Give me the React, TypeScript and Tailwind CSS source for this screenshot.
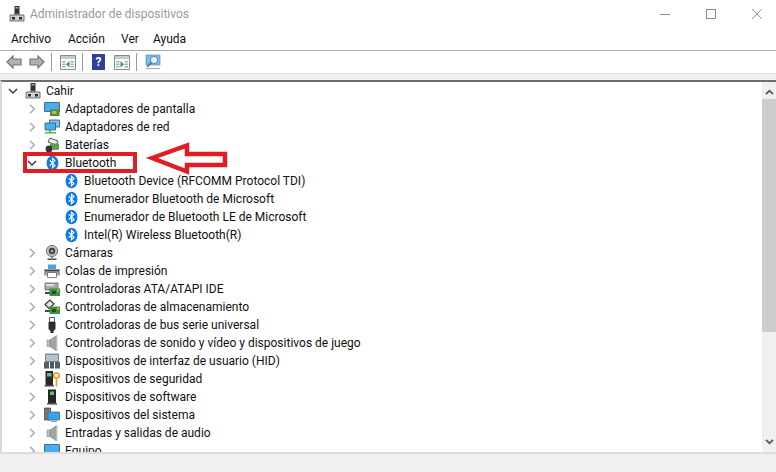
import type { ReactNode } from "react";

const Svg = ({ children, className = "w-4 h-4" }: { children: ReactNode; className?: string }) => (
  <svg viewBox="0 0 16 16" className={className}>
    {children}
  </svg>
);

const Computer = () => (
  <Svg>
    <path d="M5.5 0h5v8h-5z" fill="#333" />
    <path d="M6.5 1h3v1.5h-3z" fill="#a8a8a8" />
    <path d="M1 9h14v6H1z" fill="#d0d0d0" stroke="#555" strokeWidth="0.8" />
    <path d="M5 7.5h6V9H5z" fill="#7a7a7a" />
    <path d="M3 11h3v2.5H3zM10 11h3v2.5h-3z" fill="#2c2c2c" />
  </Svg>
);

const Monitor = ({ card = false, net = false }: { card?: boolean; net?: boolean }) => (
  <Svg>
    {net && <path d="M5.5 1h10v7h-10z" fill="#7cc0ea" stroke="#44627a" strokeWidth="0.9" />}
    <path d={net ? "M1 4h10.5v7H1z" : "M.5 1.5h15v9H.5z"} fill="#45aeef" stroke="#44627a" strokeWidth="0.9" />
    {net && <path d="M5 11h2v2H5zM1 13h11v1.5H1z" fill="#4fb35a" />}
    {card && <path d="M6 8.5h9.5v6.5H6z" fill="#4f8a3a" />}
    {card && <path d="M8 10h4.5v3H8z" fill="#d4b13a" />}
  </Svg>
);

const Battery = () => (
  <Svg>
    <path d="M6 1l8 3-2 4-8-3z" fill="#eee" stroke="#444" strokeWidth="0.9" />
    <path d="M6 6.5h9v6H6z" fill="#5da04c" />
    <circle cx="5" cy="12" r="3.4" fill="#333" />
    <path d="M8 11h6v2H8z" fill="#8a8a8a" />
  </Svg>
);

const Bt = () => (
  <svg viewBox="0 0 14 16" className="w-[13px] h-4">
    <ellipse cx="7" cy="8" rx="6.4" ry="7.9" fill="#0b7be6" />
    <path d="M4 5.2L9.6 10.6 7 13V3l2.6 2.4L4 10.8" fill="none" stroke="#fff" strokeWidth="1.3" />
  </svg>
);

const Camera = () => (
  <Svg>
    <circle cx="8" cy="6" r="5.6" fill="#c4c4c4" stroke="#666" strokeWidth="0.9" />
    <circle cx="8" cy="6" r="3.2" fill="#3c3c3c" />
    <circle cx="8" cy="6" r="1.5" fill="#8fa7b8" />
    <path d="M3.5 13.5h9V15h-9z" fill="#555" />
    <path d="M7 11.5h2v2H7z" fill="#888" />
  </Svg>
);

const Printer = () => (
  <Svg>
    <path d="M4 1.5h8V6H4z" fill="#49a7dc" />
    <path d="M0 6h16v6.5H0z" fill="#a2a2a2" />
    <path d="M1 7h14v1.2H1z" fill="#3a3a3a" />
    <path d="M3.5 9.5h9v5h-9z" fill="#fff" stroke="#666" strokeWidth="0.8" />
  </Svg>
);

const Disk = ({ small = false }: { small?: boolean }) => (
  <Svg>
    {small ? (
      <path d="M1 5.5l5-4.5 4 4-5 4.5z" fill="#e2e2e2" stroke="#333" strokeWidth="1.1" />
    ) : (
      <path d="M1 2h13v7H1z" fill="#a8a8a8" stroke="#555" strokeWidth="0.7" />
    )}
    {!small && <path d="M2 3h8v2H2z" fill="#e0e0e0" />}
    <path d="M1 11h5v2H1z" fill="#444" />
    <path d="M5.5 7.5H16V15H5.5z" fill="#3f8f3f" />
    <path d="M8 10h4v3H8z" fill="#1f4f2f" />
    <path d="M13 8.5h2v2h-2z" fill="#d4b13a" />
  </Svg>
);

const Usb = () => (
  <Svg>
    <path d="M5.5.5h5V5h-5z" fill="#fff" stroke="#555" strokeWidth="1" />
    <path d="M4.5 5h7v7l-2 2v2h-3v-2l-2-2z" fill="#2e2e2e" />
  </Svg>
);

const Speaker = () => (
  <Svg>
    <path d="M3 5h3v6.5H3z" fill="#c4c4c4" stroke="#8a8a8a" strokeWidth="0.6" />
    <path d="M6 5l6.5-4.5v15.5L6 11.5z" fill="#a4a4a4" stroke="#7a7a7a" strokeWidth="0.6" />
    <path d="M12.5.5h1.2V16h-1.2z" fill="#dcdcdc" />
  </Svg>
);

const Keyboard = () => (
  <Svg>
    <path d="M1.5 1h13v7.5h-13z" fill="#9fb3c4" stroke="#556" strokeWidth="0.7" />
    <path d="M2.5 3h11M2.5 5h11M2.5 7h11" stroke="#f0f4ff" strokeWidth="1" strokeDasharray="1 1" />
    <path d="M0 9h5v6.5H0zM11 9h5v6.5h-5z" fill="#5c5c5c" />
    <path d="M6 9h4v6.5H6z" fill="#44586a" />
  </Svg>
);

const Tower = ({ keyed = false }: { keyed?: boolean }) => (
  <Svg>
    <path d={keyed ? "M1.5 0h7.5v14H1.5z" : "M4 .5h8V14H4z"} fill="#262626" />
    <path d={keyed ? "M3 2h4.5v3.5H3z" : "M6 2.5h4V6H6z"} fill="#6bc06b" />
    <path d={keyed ? "M.5 14H10v1.6H.5z" : "M3 14h10v1.6H3z"} fill="#555" />
    {keyed && <circle cx="12.5" cy="4.5" r="2.7" fill="none" stroke="#e0a92c" strokeWidth="1.8" />}
    {keyed && <path d="M11.6 7h1.8v8.5h-1.8z" fill="#e0a92c" />}
  </Svg>
);

const SystemIcon = () => (
  <Svg>
    <path d="M.5 1h6v12h-6z" fill="#777" stroke="#3c3c3c" strokeWidth="0.7" />
    <path d="M4 5h11.5v8H4z" fill="#35a3ea" stroke="#3a6f92" strokeWidth="0.8" />
    <path d="M7 13.5h6V15H7z" fill="#8aa" />
  </Svg>
);

const WindowIcon = ({ right = false }: { right?: boolean }) => (
  <svg viewBox="0 0 16 15" className="w-4 h-[15px]">
    <path d="M.5.5h15v14H.5z" fill="#fff" stroke="#8a8a8a" />
    <path d="M1 1h14v3H1z" fill="#c6cbce" />
    <path d="M2 6h3.5v1.5H2zM2 8.5h3.5V10H2zM2 11h3.5v1.5H2zM10.5 6H14v1.5h-3.5zM10.5 8.5H14V10h-3.5zM10.5 11H14v1.5h-3.5z" fill="#9fb3bd" />
    <path d={right ? "M6.5 6l3.5 3.2-3.5 3.2z" : "M9.5 6L6 9.2l3.5 3.2z"} fill="#2f9e44" />
  </svg>
);

const Sep = ({ className = "" }: { className?: string }) => <div className={`w-px h-[18px] bg-[#9a9a9a] ${className}`} />;

type Node = { label: string; icon: ReactNode; level: 0 | 1 | 2; open?: boolean };

const NODES: Node[] = [
  { label: "Cahir", icon: <Computer />, level: 0, open: true },
  { label: "Adaptadores de pantalla", icon: <Monitor card />, level: 1 },
  { label: "Adaptadores de red", icon: <Monitor net />, level: 1 },
  { label: "Baterías", icon: <Battery />, level: 1 },
  { label: "Bluetooth", icon: <Bt />, level: 1, open: true },
  { label: "Bluetooth Device (RFCOMM Protocol TDI)", icon: <Bt />, level: 2 },
  { label: "Enumerador Bluetooth de Microsoft", icon: <Bt />, level: 2 },
  { label: "Enumerador de Bluetooth LE de Microsoft", icon: <Bt />, level: 2 },
  { label: "Intel(R) Wireless Bluetooth(R)", icon: <Bt />, level: 2 },
  { label: "Cámaras", icon: <Camera />, level: 1 },
  { label: "Colas de impresión", icon: <Printer />, level: 1 },
  { label: "Controladoras ATA/ATAPI IDE", icon: <Disk />, level: 1 },
  { label: "Controladoras de almacenamiento", icon: <Disk small />, level: 1 },
  { label: "Controladoras de bus serie universal", icon: <Usb />, level: 1 },
  { label: "Controladoras de sonido y vídeo y dispositivos de juego", icon: <Speaker />, level: 1 },
  { label: "Dispositivos de interfaz de usuario (HID)", icon: <Keyboard />, level: 1 },
  { label: "Dispositivos de seguridad", icon: <Tower keyed />, level: 1 },
  { label: "Dispositivos de software", icon: <Tower />, level: 1 },
  { label: "Dispositivos del sistema", icon: <SystemIcon />, level: 1 },
  { label: "Entradas y salidas de audio", icon: <Speaker />, level: 1 },
  { label: "Equipo", icon: <Monitor />, level: 1 },
];

function Chevron({ open }: { open?: boolean }) {
  return (
    <svg viewBox="0 0 10 10" className="w-[10px] h-[10px]">
      {open ? (
        <path d="M1 3l4 4 4-4" fill="none" stroke="#3c3c3c" strokeWidth="1.5" />
      ) : (
        <path d="M3 .8L7.2 5 3 9.2" fill="none" stroke="#aeaeae" strokeWidth="1.6" />
      )}
    </svg>
  );
}

function Row({ node }: { node: Node }) {
  const pad = node.level === 0 ? "pl-[8px]" : node.level === 1 ? "pl-[27px]" : "pl-[46px]";
  return (
    <div className={`flex items-center h-[18px] shrink-0 ${pad}`}>
      <div className="w-[10px] flex items-center">{node.level < 2 && <Chevron open={node.open} />}</div>
      <div className="w-4 ml-[7px] flex justify-center">{node.icon}</div>
      <span className="ml-[5px] text-[12px] leading-[18px] text-[#111] whitespace-nowrap">{node.label}</span>
    </div>
  );
}

export default function App() {
  return (
    <div className="relative w-[776px] h-[472px] overflow-hidden bg-white flex flex-col font-['Roboto','Open_Sans',sans-serif]">
      <div className="h-[30px] flex items-center pl-[9px] pr-[14px] pb-[2px] shrink-0">
        <Computer />
        <span className="ml-[5px] text-[12px] text-[#9a9a9a]">Administrador de dispositivos</span>
        <div className="ml-auto flex items-center gap-[36px]">
          <div className="w-[10px] h-px bg-[#8a8a8a]" />
          <div className="w-[10px] h-[10px] border border-[#8a8a8a]" />
          <svg viewBox="0 0 10 10" className="w-[10px] h-[10px]">
            <path d="M0 0l10 10M10 0L0 10" stroke="#8a8a8a" strokeWidth="0.9" />
          </svg>
        </div>
      </div>

      <div className="h-[21px] flex items-center pl-[11px] pb-[2px] text-[12px] text-[#111] border-b border-[#a8a8a8] shrink-0">
        <span className="w-[57px]">Archivo</span>
        <span className="w-[53px]">Acción</span>
        <span className="w-[32px]">Ver</span>
        <span>Ayuda</span>
      </div>

      <div className="h-[22px] flex items-center pl-[6px] shrink-0">
        <svg viewBox="0 0 16 14" className="w-4 h-[14px]">
          <path d="M1 7l6-6v3h8v6H7v3z" fill="#b0b0b0" stroke="#757575" strokeWidth="1.2" />
        </svg>
        <svg viewBox="0 0 16 14" className="w-4 h-[14px] ml-[7px]">
          <path d="M15 7L9 1v3H1v6h8v3z" fill="#b0b0b0" stroke="#757575" strokeWidth="1.2" />
        </svg>
        <Sep className="ml-[6px]" />
        <div className="ml-[8px]"><WindowIcon /></div>
        <Sep className="ml-[6px]" />
        <div className="ml-[9px] w-[13px] h-4 bg-[#2f3f9e] flex items-center justify-center text-white text-[12px] font-bold leading-none">?</div>
        <div className="ml-[9px]"><WindowIcon right /></div>
        <Sep className="ml-[6px]" />
        <svg viewBox="0 0 16 16" className="w-4 h-4 ml-[8px]">
          <path d="M1 1h14v10H1z" fill="#6cc0f2" stroke="#6a8a9f" strokeWidth="0.7" />
          <circle cx="9" cy="6" r="3.6" fill="#e4f4fd" stroke="#6a8a9f" />
          <path d="M6.5 8.5L2 13" stroke="#666" strokeWidth="1.4" />
          <path d="M1 14.5h14" stroke="#9ab" />
        </svg>
      </div>

      <div className="h-[7px] bg-[#f0f0f0] border-t border-[#e0e0e0] shrink-0" />

      <div className="flex-1 min-h-0 flex border-t-2 border-[#6e6e6e] border-l-2 border-l-[#d8d8d8]">
        <div className="flex-1 min-w-0 overflow-hidden flex flex-col -ml-[2px]">
          {NODES.map((n) => (
            <Row key={n.label} node={n} />
          ))}
        </div>
        <div className="w-[14px] bg-[#f0f0f0] flex flex-col items-center shrink-0">
          <svg viewBox="0 0 10 8" className="w-[9px] h-[7px] mt-[6px]">
            <path d="M1 7l4-4 4 4" fill="none" stroke="#555" strokeWidth="2" />
          </svg>
          <div className="w-full h-[233px] mt-[4px] bg-[#cdcdcd]" />
          <svg viewBox="0 0 10 8" className="w-[9px] h-[7px] mt-auto mb-[6px]">
            <path d="M1 1l4 4 4-4" fill="none" stroke="#555" strokeWidth="2" />
          </svg>
        </div>
      </div>

      <div className="h-[20px] bg-[#f0f0f0] border-t-2 border-[#dcdcdc] shrink-0" />

      {/* red annotation over the tree */}
      <div className="absolute left-[23px] top-[152px] w-[114px] h-[21px] border-[4px] border-[#e01c24]" />
      <svg viewBox="146 141 84 34" className="absolute left-[146px] top-[141px] w-[84px] h-[34px]">
        <path d="M152 158L187 145.5v8.5h38v11h-38v6.5z" fill="none" stroke="#e01c24" strokeWidth="4.5" />
      </svg>
    </div>
  );
}
